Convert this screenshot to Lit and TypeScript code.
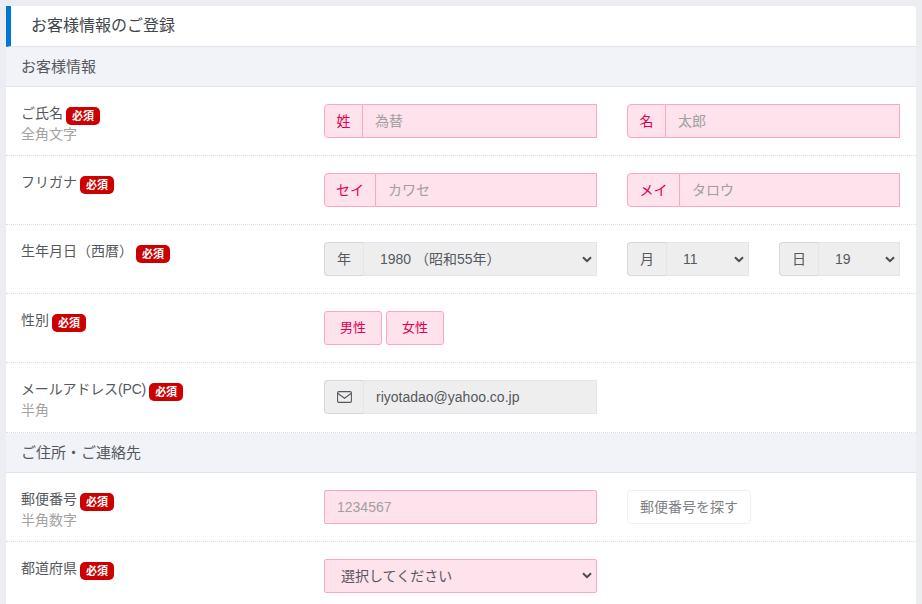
import { LitElement, html, css } from "lit";
import { customElement } from "lit/decorators.js";

const chevron = html`<svg class="chev" width="10" height="7" viewBox="0 0 10 7"><path d="M1 1.2 5 5.2 9 1.2" fill="none" stroke="#4a4a4a" stroke-width="2"/></svg>`;

@customElement("app-root")
export class AppRoot extends LitElement {
  static styles = css`
    :host { display: block; width: 922px; height: 604px; overflow: hidden; background: #ebedf3; font-family: "Liberation Sans", "Noto Sans CJK JP", sans-serif; color: #4f5459; font-size: 14px; line-height: 20px; }
    * { box-sizing: border-box; }
    .card { margin: 6px 6px 0; width: 910px; background: #fff; border-radius: 3px 3px 0 0; }
    .title { height: 41px; border-left: 5px solid #0075d6; border-bottom: 1px solid #e2e6ec; padding-left: 20px; font-size: 16px; line-height: 39px; color: #43474c; }
    .section { height: 40px; background: #f1f3f8; border-bottom: 1px solid #e0e4ea; padding-left: 15px; font-size: 15px; line-height: 39px; color: #55595e; }
    .row { height: 69px; padding: 17px 16px 0 15px; border-bottom: 1px dotted #dedede; display: grid; grid-template-columns: repeat(3, 273px); column-gap: 30px; align-items: start; }
    .row.last { border-bottom: 0; }
    .row.tall { height: 70px; }
    .label { margin-top: -1px; }
    .main { display: flex; align-items: center; gap: 3px; height: 20px; color: #55595e; white-space: nowrap; }
    .tight { letter-spacing: -0.15px; }
    .sub { color: #a3a3a3; height: 20px; line-height: 22px; }
    .badge { display: inline-block; width: 34px; height: 18px; margin-top: 6px; border-radius: 5px; background: #cc0000; color: #fff; font-size: 11px; font-weight: bold; line-height: 18px; text-align: center; }
    .group { display: flex; height: 34px; width: 100%; }
    .addon { flex: none; display: flex; align-items: center; justify-content: center; height: 34px; border-radius: 4px 0 0 4px; }
    .pink .addon { background: #fee2ec; border: 1px solid #fea5c0; color: #e0004d; padding-bottom: 1px; }
    .pink .field { background: #fee2ec; border: 1px solid #fea5c0; border-left: 0; color: #a0a0a0; padding-bottom: 1px; }
    .gray .addon { background: #eeeeee; border: 1px solid #d5d7da; border-right: 1px solid #e1e6ec; color: #55595e; width: 40px; }
    .gray .field { background: #eeeeee; border: 1px solid #e1e6ec; border-left: 0; color: #55595e; }
    .field { flex: 1; min-width: 0; height: 34px; display: flex; align-items: center; justify-content: space-between; white-space: nowrap; }
    .inp { padding-left: 12px; }
    .sel { padding: 0 4px 0 16px; }
    .dates { display: flex; gap: 30px; }
    .dates .group { width: 122px; }
    .dates .group + .group { width: 121px; }
    .btns { display: flex; gap: 4px; }
    .btn-p { width: 58px; height: 34px; padding-bottom: 1px; background: #fee2ec; border: 1px solid #fea5c0; border-radius: 3px; color: #e0004d; font-size: 13px; display: flex; align-items: center; justify-content: center; }
    .solo { background: #fee2ec; border: 1px solid #fea5c0; border-radius: 2px; height: 34px; display: flex; align-items: center; justify-content: space-between; }
    .solo.i { padding-left: 12px; color: #a0a0a0; }
    .solo.s { padding: 0 4px 1px 16px; color: #55595e; }
    .zip { width: 124px; height: 34px; padding-bottom: 1px; border: 1px solid #eff0f5; border-radius: 4px; background: #fff; color: #7d8186; display: flex; align-items: center; justify-content: center; }
    .chev { flex: none; }
  `;

  private label(t: string, sub?: string, tight = false) {
    return html`<div class="label"><div class="main"><span class=${tight ? "tight" : ""}>${t}</span><span class="badge">必須</span></div>${sub ? html`<div class="sub">${sub}</div>` : ""}</div>`;
  }
  private pink(a: string, w: number, ph: string) {
    return html`<div class="group pink"><span class="addon" style="width:${w}px">${a}</span><span class="field inp">${ph}</span></div>`;
  }
  private date(a: string, v: string) {
    return html`<div class="group gray"><span class="addon">${a}</span><span class="field sel"><span>${v}</span>${chevron}</span></div>`;
  }

  render() {
    return html`<div class="card">
      <div class="title">お客様情報のご登録</div>
      <div class="section">お客様情報</div>
      <div class="row">${this.label("ご氏名", "全角文字")}${this.pink("姓", 39, "為替")}${this.pink("名", 39, "太郎")}</div>
      <div class="row">${this.label("フリガナ")}${this.pink("セイ", 52, "カワセ")}${this.pink("メイ", 53, "タロウ")}</div>
      <div class="row">${this.label("生年月日（西暦）")}${this.date("年", "1980 （昭和55年）")}
        <div class="dates">${this.date("月", "11")}${this.date("日", "19")}</div></div>
      <div class="row">${this.label("性別")}<div class="btns"><div class="btn-p">男性</div><div class="btn-p">女性</div></div></div>
      <div class="row tall">${this.label("メールアドレス(PC)", "半角", true)}
        <div class="group gray"><span class="addon"><svg width="15" height="12" viewBox="0 0 15 12"><rect x=".6" y=".6" width="13.8" height="10.8" rx="1.2" fill="none" stroke="#55595e" stroke-width="1.1"/><path d="M1 2.5 7.5 7.2 14 2.5" fill="none" stroke="#55595e" stroke-width="1.1"/></svg></span><span class="field inp">riyotadao@yahoo.co.jp</span></div></div>
      <div class="section">ご住所・ご連絡先</div>
      <div class="row">${this.label("郵便番号", "半角数字")}<div class="solo i">1234567</div><div class="zip">郵便番号を探す</div></div>
      <div class="row last">${this.label("都道府県")}<div class="solo s"><span>選択してください</span>${chevron}</div></div>
    </div>`;
  }
}
